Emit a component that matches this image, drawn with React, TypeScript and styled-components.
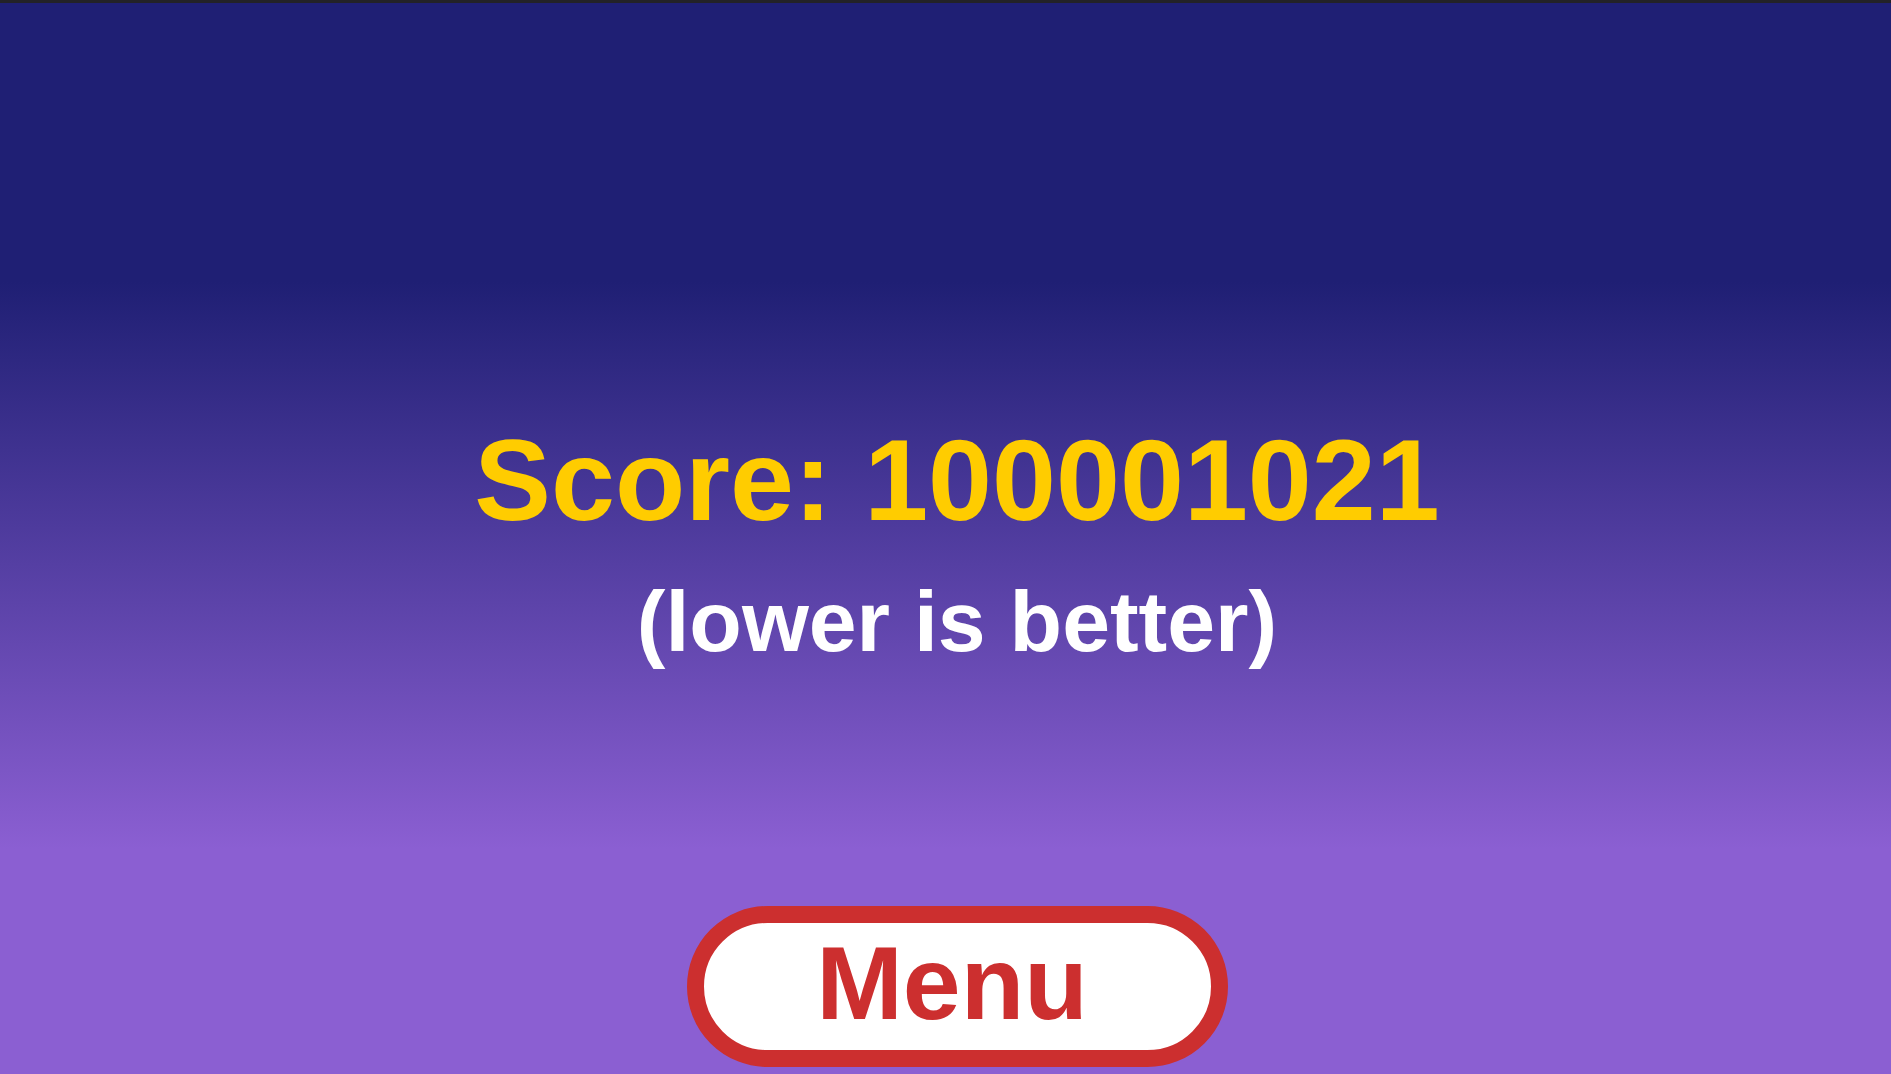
import React from "react"
import styled, { createGlobalStyle } from "styled-components"

const GlobalStyle = createGlobalStyle`
  html, body {
    margin: 0;
    padding: 0;
    height: 100%;
    overflow: hidden;
  }
  #root {
    height: 100%;
  }
`

const Screen = styled.div`
  display: flex;
  flex-direction: column;
  width: 100%;
  height: 100vh;
  font-family: "Liberation Sans", Arial, sans-serif;
  font-weight: 700;
`

const TopBar = styled.div`
  height: 3px;
  flex: none;
  background: #232227;
`

const Stage = styled.main`
  flex: 1;
  display: flex;
  flex-direction: column;
  align-items: center;
  padding-left: 23px;
  background: linear-gradient(to bottom, #1f1f74 26%, #8b5fd2 79%);
`

const Score = styled.h1`
  margin: 420px 0 0;
  font-size: 115px;
  line-height: 1;
  font-weight: 700;
  color: #ffcc00;
  white-space: nowrap;
`

const Hint = styled.p`
  margin: 40px 0 0;
  font-size: 86px;
  line-height: 1;
  color: #ffffff;
  white-space: nowrap;
`

const MenuButton = styled.button`
  margin-top: auto;
  margin-bottom: 7px;
  width: 541px;
  height: 161px;
  box-sizing: border-box;
  border: 17px solid #cc2f2f;
  border-radius: 81px;
  background: #ffffff;
  color: #cc2f2f;
  font-family: inherit;
  font-weight: 700;
  font-size: 104px;
  line-height: 1;
  padding: 0 10px 7px 0;
  cursor: pointer;
`

export default function App() {
  const score = 100001021
  return (
    <>
      <GlobalStyle />
      <Screen>
        <TopBar />
        <Stage>
          <Score>Score: {score}</Score>
          <Hint>(lower is better)</Hint>
          <MenuButton>Menu</MenuButton>
        </Stage>
      </Screen>
    </>
  )
}
